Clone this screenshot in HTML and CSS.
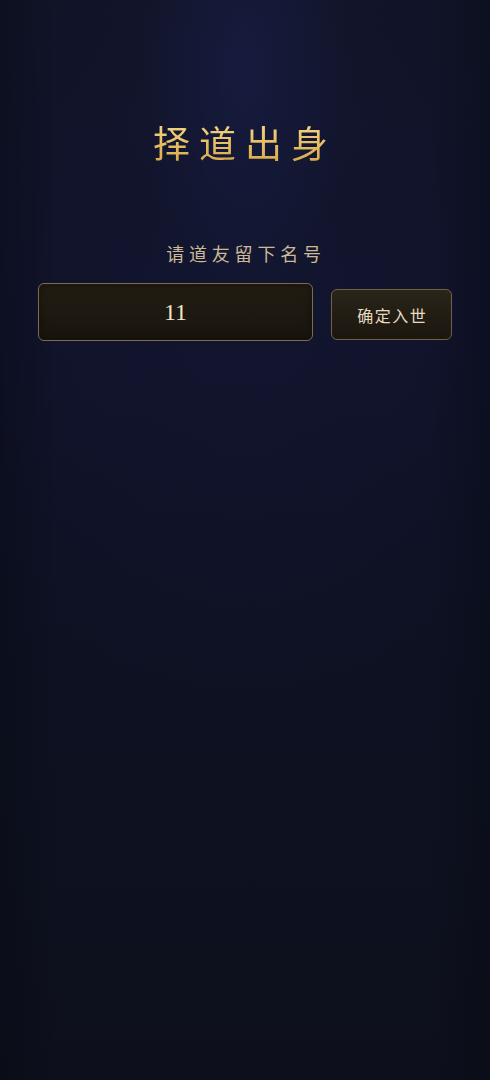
FILE: index.html
```html
<!DOCTYPE html>
<html lang="zh">
<head>
<meta charset="utf-8">
<title>择道出身</title>
<link rel="stylesheet" href="styles.css">
</head>
<body>
<main class="page">
  <h1 class="title">择道出身</h1>
  <p class="prompt">请道友留下名号</p>
  <div class="name-row">
    <div class="name-input">11</div>
    <button class="enter-btn" type="button">确定入世</button>
  </div>
</main>
</body>
</html>
```
FILE: styles.css
```css
html, body {
  margin: 0;
  padding: 0;
}
body {
  width: 490px;
  min-height: 1080px;
  background-color: #0e111e;
  background-image:
    linear-gradient(to right, rgba(4,6,14,0.3), rgba(4,6,14,0) 12%, rgba(4,6,14,0) 88%, rgba(4,6,14,0.3)),
    radial-gradient(ellipse 22% 22% at 50% 6%, rgba(26,32,78,0.55), rgba(26,32,78,0) 100%),
    radial-gradient(ellipse 60% 45% at 50% 25%, rgba(20,24,52,0.45), rgba(20,24,52,0) 100%),
    linear-gradient(to bottom, #111427 0%, #10132a 30%, #0e1121 65%, #0d101c 100%);
  font-family: "Noto Sans CJK SC", "Noto Sans", sans-serif;
}
.page {
  min-height: 1080px;
  display: flex;
  flex-direction: column;
  align-items: center;
  padding-top: 119px;
  box-sizing: border-box;
}
.title {
  margin: 0;
  font-size: 37px;
  line-height: 46px;
  font-weight: 400;
  letter-spacing: 9px;
  color: #e9c167;
  background: linear-gradient(to bottom, #f6d98a, #d9a744);
  -webkit-background-clip: text;
  background-clip: text;
  -webkit-text-fill-color: transparent;
}
.prompt {
  margin: 75px 0 0;
  font-size: 18px;
  line-height: 26px;
  letter-spacing: 4.8px;
  padding-left: 2px;
  color: #cdb997;
}
.name-row {
  margin-top: 17px;
  width: 414px;
  display: flex;
  align-items: center;
  gap: 18px;
}
.name-input {
  width: 275px;
  height: 58px;
  box-sizing: border-box;
  border: 1px solid #7d6b49;
  border-radius: 6px;
  background: linear-gradient(to bottom, #221d13, #19150e);
  color: #efe4c8;
  font-family: "Liberation Serif", "DejaVu Serif", serif;
  font-size: 24px;
  display: flex;
  align-items: center;
  justify-content: center;
  box-shadow: inset 0 0 10px rgba(0,0,0,0.4);
}
.enter-btn {
  width: 121px;
  height: 51px;
  box-sizing: border-box;
  border: 1px solid #6f6146;
  border-radius: 6px;
  background: linear-gradient(to bottom, #2a2419, #1b170f);
  color: #e6dac0;
  font-family: "Noto Sans CJK SC", "Noto Sans", sans-serif;
  font-size: 16px;
  letter-spacing: 1.5px;
  padding: 0 0 0 1.5px;
  margin-top: 5px;
  cursor: pointer;
}
```
